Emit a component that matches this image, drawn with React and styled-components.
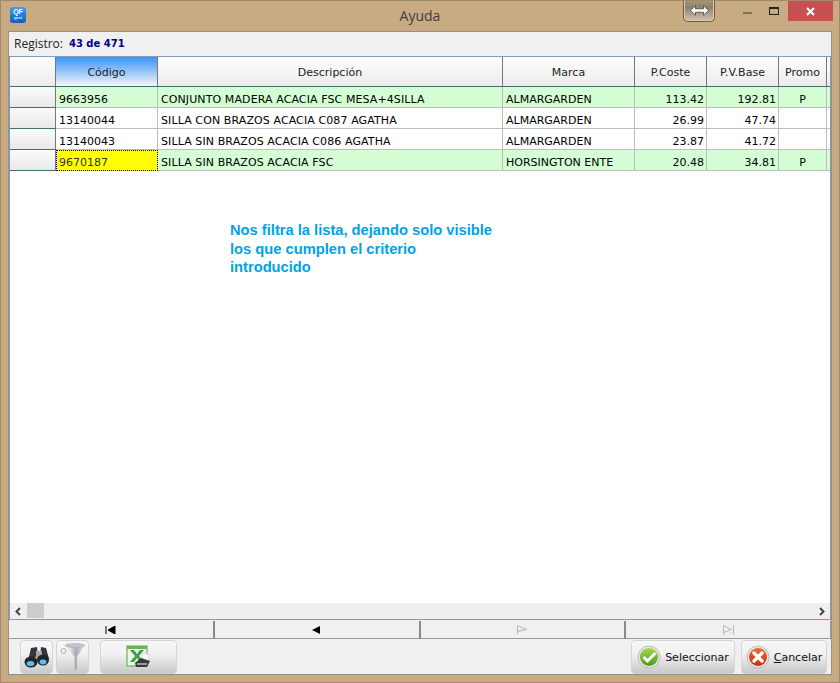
import React from "react";
import styled, { createGlobalStyle } from "styled-components";

const Global = createGlobalStyle`
  html, body { margin: 0; padding: 0; background: #c8ab82; }
  #root { width: 840px; height: 683px; }
  * { box-sizing: border-box; }
`;

const Win = styled.div`
  width: 840px; height: 683px; background: #c8ab82; display: flex; flex-direction: column;
  border: 1px solid #a08a68; font-family: "DejaVu Sans", sans-serif; font-size: 11px; color: #000;
  overflow: hidden;
`;
const TitleBar = styled.div`
  height: 30px; flex: none; position: relative; display: flex; align-items: center; justify-content: center;
`;
const Title = styled.div`
  font-family: "Open Sans", sans-serif; font-size: 14px; color: #404040; margin-top: -1px;
`;
const AppIcon = styled.div`
  position: absolute; left: 9px; top: 6px; width: 16px; height: 16px; border-radius: 3px;
  background: linear-gradient(#3f9bf0, #0f5fc0); color: #fff; font: bold 7px/8px "Liberation Sans", sans-serif;
  text-align: center; padding-top: 1px;
`;
const AppIconSub = styled.div`font-size: 4px; line-height: 4px; color: #dfefff;`;
const SwapBtn = styled.div`
  position: absolute; left: 682px; top: -1px; width: 32px; height: 22px; border: 1px solid #6a5c47; border-top: none;
  border-radius: 0 0 5px 5px; background: linear-gradient(#a8977d, #8f806b 35%, #c9b9a0 90%);
  box-shadow: inset 0 0 0 1px #d9cbb4;
  display: flex; align-items: center; justify-content: center;
`;
const WinCtl = styled.div`
  position: absolute; top: 0; right: 6px; display: flex; align-items: flex-start;
`;
const CtlBtn = styled.div`
  width: ${p => p.$w}px; height: 20px; display: flex; align-items: center; justify-content: center;
  background: ${p => p.$bg || "transparent"};
`;
const Body = styled.div`
  margin: 0 7px; width: 824px; height: 644px; background: #f0f0f0; border: 1px solid #9d917d; border-bottom-color: #8e8e8e;
  display: flex; flex-direction: column;
`;
const InfoBar = styled.div`
  height: 24px; flex: none; display: flex; align-items: center; padding: 0 0 2px 5px; gap: 6px; color: #222;
  font-family: "Open Sans", sans-serif; font-size: 12px;
`;
const InfoVal = styled.span`
  font-family: "DejaVu Sans", sans-serif; font-weight: bold; font-size: 10px; color: #000080;
`;
const Grid = styled.div`
  width: 822px; height: 564px; border: 1px solid #7f9db9; background: #fff; display: flex; flex-direction: column;
`;
const HeadRow = styled.div`
  display: flex; height: 30px; flex: none; border-bottom: 1px solid #3f6f6f;
  background: linear-gradient(#fdfdfd, #ececec);
`;
const HeadCell = styled.div`
  width: ${p => p.$w}px; flex: none; display: flex; align-items: center; justify-content: center; color: #222;
  border-right: 1px solid #777; padding-top: 2px;
  background: ${p => p.$active
    ? "linear-gradient(#3d94f6, #8cc0f8 45%, #f4f6f8)"
    : "linear-gradient(#fdfdfd, #ececec)"};
`;
const Row = styled.div`
  display: flex; height: 21px; flex: none; background: ${p => p.$green ? "#d5fed5" : "#fff"};
  border-bottom: 1px solid #bdbdbd;
`;
const Indicator = styled.div`
  width: 46px; flex: none; background: linear-gradient(#fbfbfb, #e8e8e8);
  border-right: 1px solid #777; margin-bottom: -1px; border-bottom: 1px solid #3f6f6f;
`;
const Cell = styled.div`
  width: ${p => p.$w}px; flex: none; display: flex; align-items: center; white-space: nowrap; overflow: hidden;
  padding: 4px ${p => p.$right ? 2 : 3}px 0 3px; border-right: 1px solid #bdbdbd; letter-spacing: ${p => p.$wide ? ".1px" : "0"};
  justify-content: ${p => p.$right ? "flex-end" : p.$center ? "center" : "flex-start"};
  ${p => p.$sel ? "background:#ffff00; border: 1px dotted #000; margin-bottom: -1px; padding: 3px 2px 0 2px; color:#333;" : ""}
`;
const Empty = styled.div`
  flex: 1; position: relative;
`;
const Note = styled.div`
  position: absolute; left: 220px; top: 50px; width: 290px; font: bold 14.7px/18.5px "Liberation Sans", sans-serif; color: #00a2e8;
`;
const ScrollBar = styled.div`
  height: 16px; flex: none; background: #efefef; display: flex; align-items: center; justify-content: space-between; position: relative;
`;
const Thumb = styled.div`
  position: absolute; left: 17px; top: 0; width: 17px; height: 15px; background: #cdcdcd;
`;
const Nav = styled.div`
  display: flex; height: 18px; flex: none; margin-top: 1px; width: 822px;
`;
const NavBtn = styled.div`
  flex: 1; display: flex; align-items: center; justify-content: center; border-bottom: 1px solid #9a9a9a; border-right: 2px solid #8a8a8a;
  &:last-child { border-right-color: #9a9a9a; border-right-width: 1px; }
`;
const Footer = styled.div`
  flex: 1; display: flex; align-items: flex-start; padding: 1px 4px 0 11px;
`;
const Btn = styled.div`
  height: 34px; width: ${p => p.$w}px; margin-right: ${p => p.$mr || 0}px; border: 1px solid #d5d5d5; border-radius: 4px;
  background: linear-gradient(#f7f7f7, #f1f1f1 40%, #c9c9c9);
  display: flex; align-items: center; justify-content: center; gap: 4px; color: #111;
`;
const Spacer = styled.div`flex: 1;`;
const U = styled.span`text-decoration: underline;`;

const cols = [102, 345, 132, 72, 72, 48];
const heads = ["Código", "Descripción", "Marca", "P.Coste", "P.V.Base", "Promo"];
const rows = [
  ["9663956", "CONJUNTO MADERA ACACIA FSC MESA+4SILLA", "ALMARGARDEN", "113.42", "192.81", "P", true],
  ["13140044", "SILLA CON BRAZOS ACACIA C087 AGATHA", "ALMARGARDEN", "26.99", "47.74", "", false],
  ["13140043", "SILLA SIN BRAZOS ACACIA C086 AGATHA", "ALMARGARDEN", "23.87", "41.72", "", false],
  ["9670187", "SILLA SIN BRAZOS ACACIA FSC", "HORSINGTON ENTE", "20.48", "34.81", "P", true],
];

const First = ({ c = "#000" }) => (
  <svg width="11" height="8" viewBox="0 0 11 8"><path d="M1 0v8M10 0v8L3 4z" stroke={c} fill={c} /></svg>
);
const Prev = () => <svg width="9" height="8" viewBox="0 0 9 8"><path d="M8 0v8L0 4z" fill="#000" /></svg>;
const NextOff = () => <svg width="12" height="10" viewBox="0 0 12 10"><path d="M1.500 .5v9M1.500 .5l9 4-9 2" stroke="#b5b5b5" fill="none" /></svg>;
const LastOff = () => <svg width="13" height="10" viewBox="0 0 13 10"><path d="M1.500 .5v9M1.500 .5l8 4-8 3M11.500 .5v9" stroke="#b5b5b5" fill="none" /><path d="M8 8h3" stroke="#ddd" /></svg>;

const Binoculars = () => (
  <svg width="26" height="24" viewBox="0 0 26 24">
    <path d="M7 3l6-1 1 9-10 5z" fill="#33363a" />
    <path d="M17 2l5 1 3 11-9-2z" fill="#33363a" />
    <rect x="12" y="6" width="6" height="9" fill="#a8a8a8" />
    <ellipse cx="7" cy="17" rx="6.500" ry="5.500" fill="#22252a" />
    <ellipse cx="19" cy="15" rx="6" ry="5.500" fill="#22252a" />
    <ellipse cx="6.500" cy="18.500" rx="3.800" ry="2.600" fill="#5cc0e8" />
    <ellipse cx="19" cy="17" rx="3.500" ry="2.400" fill="#5cc0e8" />
  </svg>
);
const Funnel = () => (
  <svg width="28" height="30" viewBox="0 0 28 30">
    <defs><linearGradient id="fg" x1="0" x2="1"><stop offset="0" stopColor="#f6f6fa" /><stop offset=".3" stopColor="#dcdce4" /><stop offset=".55" stopColor="#a8a8b4" /><stop offset="1" stopColor="#f0f0f6" /></linearGradient></defs>
    <path d="M6 3h20l-8 12v13h-2.500V15z" fill="url(#fg)" />
    <ellipse cx="16" cy="3.500" rx="10" ry="2" fill="#c4c4d0" stroke="#a8a8b4" strokeWidth=".5" />
    <circle cx="4.500" cy="9" r="2.500" fill="none" stroke="#b0b0b0" />
  </svg>
);
const ExcelScan = () => (
  <svg width="26" height="24" viewBox="0 0 26 24">
    <rect x="1" y="1" width="20" height="20" fill="#eaf6e6" stroke="#5a9f4a" />
    <rect x="1" y="1" width="20" height="3" fill="#6db35a" />
    <path d="M4 5h4l3 4 3-4h4l-5 6 5 6h-4l-3-4-3 4H4l5-6z" fill="#3aa14a" />
    <path d="M18 8l6 2-2 6-7-3z" fill="#f8f8f8" stroke="#c4c4c4" strokeWidth=".5" />
    <path d="M9 18l6-5 9 3-3 6H10z" fill="#3a3a3a" />
    <rect x="11" y="18" width="10" height="2" fill="#999" />
  </svg>
);
const Check = () => (
  <svg width="24" height="24" viewBox="0 0 24 24">
    <defs><linearGradient id="gc" x1="0" y1="0" x2="0" y2="1"><stop offset="0" stopColor="#a6d84a" /><stop offset="1" stopColor="#4f9a1e" /></linearGradient></defs>
    <circle cx="12" cy="12" r="11" fill="#e4e4e4" stroke="#aaa" strokeWidth=".7" />
    <circle cx="12" cy="12" r="9" fill="url(#gc)" />
    <path d="M6.500 12l4 4 8-8" fill="none" stroke="#fff" strokeWidth="3" />
  </svg>
);
const Cross = () => (
  <svg width="24" height="24" viewBox="0 0 24 24">
    <defs><linearGradient id="rc" x1="0" y1="0" x2="0" y2="1"><stop offset="0" stopColor="#ee6a3a" /><stop offset="1" stopColor="#c8300f" /></linearGradient></defs>
    <circle cx="12" cy="12" r="11" fill="#e4e4e4" stroke="#aaa" strokeWidth=".7" />
    <circle cx="12" cy="12" r="9" fill="url(#rc)" />
    <path d="M8 8l8 8M16 8l-8 8" fill="none" stroke="#fff" strokeWidth="3.400" strokeLinecap="round" />
  </svg>
);

export default function App() {
  return (
    <Win>
      <Global />
      <TitleBar>
        <AppIcon>QF<AppIconSub>gest</AppIconSub></AppIcon>
        <Title>Ayuda</Title>
        <SwapBtn>
          <svg width="19" height="11" viewBox="0 0 19 11"><path d="M.5 5.500L5.500 .8v3h8v-3l5 4.700-5 4.700v-3h-8v3z" fill="#fff" stroke="#444" strokeWidth=".8" /></svg>
        </SwapBtn>
        <WinCtl>
          <CtlBtn $w={26}><svg width="9" height="8"><rect width="9" height="2" y="5" fill="#7d7360" /></svg></CtlBtn>
          <CtlBtn $w={28}><svg width="10" height="8"><rect x=".5" y=".5" width="9" height="7" fill="none" stroke="#222" /><rect width="10" height="2" fill="#222" /></svg></CtlBtn>
          <CtlBtn $w={45} $bg="#c75050"><svg width="9" height="9"><path d="M1 1l7 7M8 1l-7 7" stroke="#fff" strokeWidth="2" /></svg></CtlBtn>
        </WinCtl>
      </TitleBar>
      <Body>
        <InfoBar>Registro:<InfoVal>43 de 471</InfoVal></InfoBar>
        <Grid>
          <HeadRow>
            <HeadCell $w={46} />
            {heads.map((h, i) => <HeadCell key={h} $w={cols[i]} $active={i === 0}>{h}</HeadCell>)}
          </HeadRow>
          {rows.map((r, ri) => (
            <Row key={r[0]} $green={r[6]}>
              <Indicator />
              <Cell $w={cols[0]} $sel={ri === 3}>{r[0]}</Cell>
              <Cell $w={cols[1]} $wide>{r[1]}</Cell>
              <Cell $w={cols[2]}>{r[2]}</Cell>
              <Cell $w={cols[3]} $right>{r[3]}</Cell>
              <Cell $w={cols[4]} $right>{r[4]}</Cell>
              <Cell $w={cols[5]} $center>{r[5]}</Cell>
            </Row>
          ))}
          <Empty>
            <Note>Nos filtra la lista, dejando solo visible<br />los que cumplen el criterio<br />introducido</Note>
          </Empty>
          <ScrollBar>
            <svg width="16" height="15" viewBox="0 0 16 15"><path d="M10 4L6.500 7.500 10 11" fill="none" stroke="#444" strokeWidth="2" /></svg>
            <Thumb />
            <svg width="16" height="15" viewBox="0 0 16 15"><path d="M6 4l3.500 3.500L6 11" fill="none" stroke="#444" strokeWidth="2" /></svg>
          </ScrollBar>
        </Grid>
        <Nav>
          <NavBtn><First /></NavBtn>
          <NavBtn><Prev /></NavBtn>
          <NavBtn><NextOff /></NavBtn>
          <NavBtn><LastOff /></NavBtn>
        </Nav>
        <Footer>
          <Btn $w={33} $mr={3}><Binoculars /></Btn>
          <Btn $w={33} $mr={11}><Funnel /></Btn>
          <Btn $w={77}><ExcelScan /></Btn>
          <Spacer />
          <Btn $w={104} $mr={6}><Check />Seleccionar</Btn>
          <Btn $w={86}><Cross /><span><U>C</U>ancelar</span></Btn>
        </Footer>
      </Body>
    </Win>
  );
}
